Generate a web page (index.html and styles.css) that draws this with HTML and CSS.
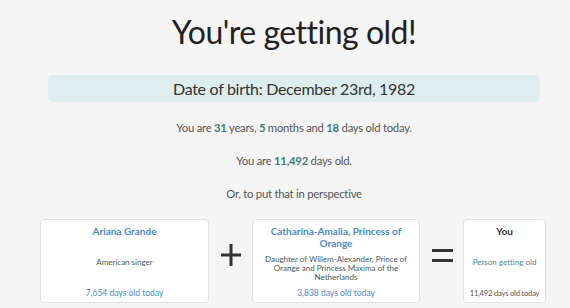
FILE: index.html
```html
<!DOCTYPE html>
<html>
<head>
<meta charset="utf-8">
<link rel="stylesheet" href="styles.css">
</head>
<body>
<main class="page">
<h1 class="title">You're getting old!</h1>
<div class="dob">Date of birth: December 23rd, 1982</div>
<p class="line">You are <b>31</b> years, <b>5</b> months and <b>18</b> days old today.</p>
<p class="line">You are <b>11,492</b> days old.</p>
<p class="line">Or, to put that in perspective</p>
<div class="row">
  <div class="card c1">
    <div class="name">Ariana Grande</div>
    <div class="desc">American singer</div>
    <div class="days">7,654 days old today</div>
  </div>
  <div class="op">
    <svg width="22" height="22" viewBox="0 0 22 22"><path d="M11 0V22M1 11H21" stroke="#333" stroke-width="3"/></svg>
  </div>
  <div class="card c2">
    <div class="name">Catharina-Amalia, Princess of Orange</div>
    <div class="desc">Daughter of Willem-Alexander, Prince of Orange and Princess Maxima of the Netherlands</div>
    <div class="days">3,838 days old today</div>
  </div>
  <div class="op">
    <svg width="22" height="13" viewBox="0 0 22 13"><path d="M1 1.5H22M1 11.5H22" stroke="#333" stroke-width="3"/></svg>
  </div>
  <div class="card c3 you">
    <div class="name">You</div>
    <div class="desc">Person getting old</div>
    <div class="days">11,492 days old today</div>
  </div>
</div>
</main>
</body>
</html>
```
FILE: styles.css
```css
html, body {
  margin: 0;
  padding: 0;
  background: #f5f5f5;
  font-family: Lato, "Open Sans", sans-serif;
  font-variant-ligatures: none;
  color: #555;
}
.page {
  margin-left: 48px;
  width: 492px;
}
.title {
  margin: 0;
  padding-top: 11px;
  height: 64px;
  box-sizing: border-box;
  text-align: center;
  font-size: 32px;
  font-weight: 400;
  line-height: 42px;
  letter-spacing: -0.5px;
  color: #222;
}
.dob {
  margin-top: 11px;
  height: 27px;
  line-height: 27px;
  background: #deeded;
  border-radius: 5px;
  text-align: center;
  font-size: 16px;
  letter-spacing: -0.3px;
  color: #333;
}
.line {
  margin: 0;
  height: 33px;
  line-height: 17px;
  font-size: 11.3px;
  letter-spacing: -0.25px;
  text-align: center;
}
.dob + .line {
  margin-top: 17px;
}
.line b {
  color: #3d7d7d;
  font-weight: 700;
}
.row {
  display: flex;
  align-items: stretch;
  margin: 1px -8px 0;
}
.card {
  box-sizing: border-box;
  height: 84px;
  background: #fff;
  border: 1px solid #e2e2e2;
  border-radius: 4px;
  display: flex;
  flex-direction: column;
  justify-content: space-between;
  align-items: center;
  text-align: center;
  padding: 5px 8px 4px;
}
.c1 { width: 169px; }
.c2 { width: 168px; }
.c3 { width: 83px; padding: 5px 2px 4px; }
.op {
  width: 43px;
  padding-bottom: 12px;
  box-sizing: border-box;
  display: flex;
  align-items: center;
  justify-content: center;
}
.name {
  font-size: 10px;
  font-weight: 700;
  color: #4a8bd0;
  line-height: 12px;
}
.desc {
  font-size: 8px;
  line-height: 9px;
  color: #3f5e5e;
}
.days {
  font-size: 8.5px;
  line-height: 10px;
  color: #4a8bd0;
}
.you .name { color: #333; }
.you .desc { color: #4f8a94; }
.you .days { color: #555; font-size: 7.6px; letter-spacing: -0.2px; }
```
